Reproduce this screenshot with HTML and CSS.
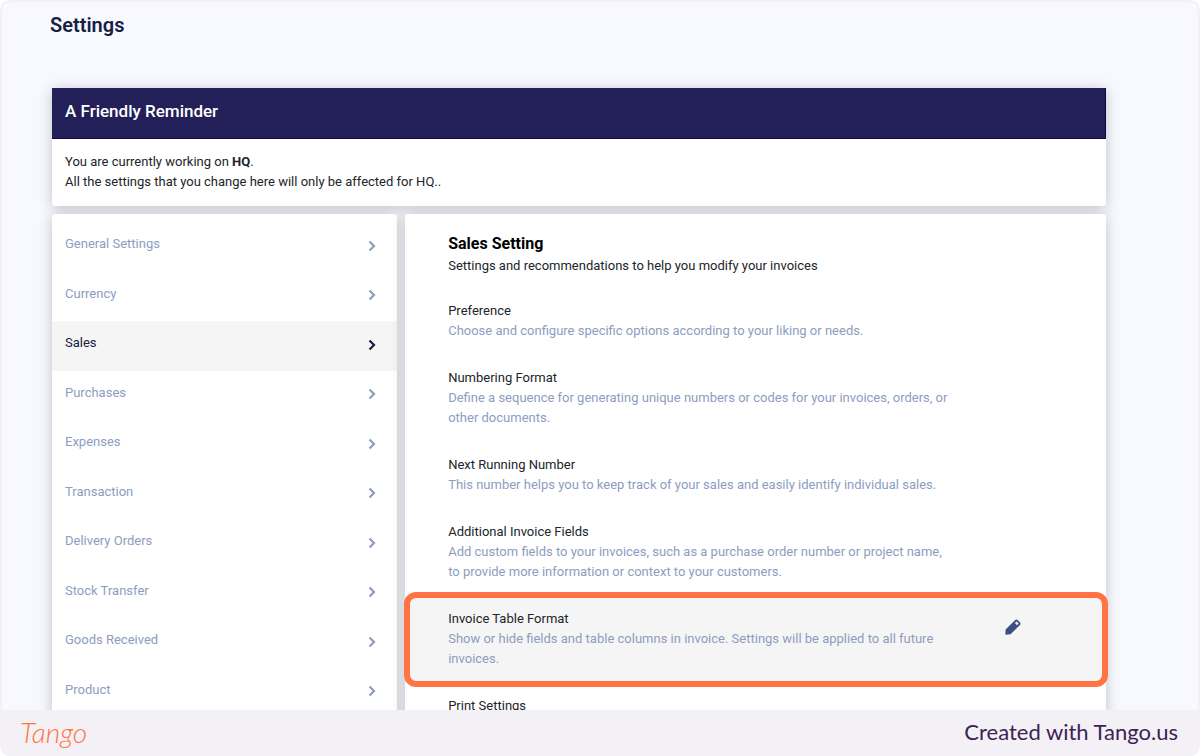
FILE: index.html
```html
<!DOCTYPE html>
<html lang="en">
<head>
    <meta charset="UTF-8">
    <meta name="viewport" content="width=device-width, initial-scale=1.0">
    <title>Settings</title>
    <link rel="stylesheet" href="styles.css">
</head>
<body>
    <svg class="sprite" aria-hidden="true">
        <symbol id="chevron" viewBox="0 0 8 12">
            <path d="M1.5 1.5 6 6 1.5 10.5" fill="none" stroke="currentColor" stroke-width="2.2"/>
        </symbol>
    </svg>

    <div class="frame">
        <main class="page">
            <h1>Settings</h1>

            <section class="card reminder">
                <h2>A Friendly Reminder</h2>
                <p>You are currently working on <b>HQ</b>.<br>
                All the settings that you change here will only be affected for HQ..</p>
            </section>

            <div class="columns">
                <nav class="card menu">
                    <a href="#">General Settings <svg class="chevron"><use href="#chevron"/></svg></a>
                    <a href="#">Currency <svg class="chevron"><use href="#chevron"/></svg></a>
                    <a href="#" class="active">Sales <svg class="chevron"><use href="#chevron"/></svg></a>
                    <a href="#">Purchases <svg class="chevron"><use href="#chevron"/></svg></a>
                    <a href="#">Expenses <svg class="chevron"><use href="#chevron"/></svg></a>
                    <a href="#">Transaction <svg class="chevron"><use href="#chevron"/></svg></a>
                    <a href="#">Delivery Orders <svg class="chevron"><use href="#chevron"/></svg></a>
                    <a href="#">Stock Transfer <svg class="chevron"><use href="#chevron"/></svg></a>
                    <a href="#">Goods Received <svg class="chevron"><use href="#chevron"/></svg></a>
                    <a href="#">Product <svg class="chevron"><use href="#chevron"/></svg></a>
                </nav>

                <section class="card detail">
                    <header class="detail-header">
                        <h2>Sales Setting</h2>
                        <p>Settings and recommendations to help you modify your invoices</p>
                    </header>
                    <div class="option">
                        <div class="option-text">
                            <h3>Preference</h3>
                            <p>Choose and configure specific options according to your liking or needs.</p>
                        </div>
                    </div>
                    <div class="option">
                        <div class="option-text">
                            <h3>Numbering Format</h3>
                            <p>Define a sequence for generating unique numbers or codes for your invoices, orders, or other documents.</p>
                        </div>
                    </div>
                    <div class="option">
                        <div class="option-text">
                            <h3>Next Running Number</h3>
                            <p>This number helps you to keep track of your sales and easily identify individual sales.</p>
                        </div>
                    </div>
                    <div class="option">
                        <div class="option-text">
                            <h3>Additional Invoice Fields</h3>
                            <p>Add custom fields to your invoices, such as a purchase order number or project name, to provide more information or context to your customers.</p>
                        </div>
                    </div>
                    <div class="option selected">
                        <div class="option-text">
                            <h3>Invoice Table Format</h3>
                            <p>Show or hide fields and table columns in invoice. Settings will be applied to all future invoices.</p>
                        </div>
                        <button class="edit" type="button" aria-label="Edit">
                            <svg viewBox="0 0 16 16">
                                <path fill-rule="evenodd" fill="#3b4f86" d="M.3 15.7.6 10.4 10 1.2Q11.4 0 12.8 1.2L15 3.4Q16.2 4.7 14.9 6.1L5.5 15.3ZM9.9 4.1 12 6.2 13.7 4.5 11.6 2.4Z"/>
                            </svg>
                        </button>
                    </div>
                    <div class="option">
                        <div class="option-text">
                            <h3>Print Settings</h3>
                        </div>
                    </div>
                </section>
            </div>
        </main>

        <footer class="footer">
            <span class="logo">Tango</span>
            <span class="credit">Created with Tango.us</span>
        </footer>
    </div>
</body>
</html>
```

FILE: styles.css
```css
* {
    margin: 0;
    padding: 0;
    box-sizing: border-box;
}

body {
    font-family: Roboto, "Liberation Sans", sans-serif;
    font-size: 13px;
    line-height: 20px;
    color: #212529;
    background: #fff;
}

.sprite {
    display: none;
}

.frame {
    display: flex;
    flex-direction: column;
    height: 100vh;
    border: 2px solid #f3f1f6;
    border-bottom: 0;
    border-radius: 10px;
    background: #f3f1f6;
    overflow: hidden;
}

.page {
    flex: 1;
    min-height: 0;
    padding: 8px 92px 0 50px;
    border-radius: 8px 8px 0 0;
    background: #f8f9fe;
    overflow: hidden;
}

h1 {
    margin: 0 0 48px -2px;
    font-size: 20px;
    line-height: 30px;
    font-weight: 600;
    color: #172044;
}

.card {
    background: #fff;
    border-radius: 3px;
    box-shadow: 0 2px 14px rgba(0, 0, 0, 0.22);
}

.reminder {
    margin-bottom: 8px;
}

.reminder h2 {
    padding: 11px 13px 15px;
    font-size: 17px;
    line-height: 24px;
    font-weight: 500;
    color: #fff;
    background: #231f58;
    border: 1px solid #0d0840;
    border-width: 0 1px 1px 0;
}

.reminder p {
    padding: 13px 13px 14px;
}

.columns {
    display: grid;
    grid-template-columns: 33fr 67fr;
    gap: 8px;
}

.menu {
    padding-top: 8px;
}

.menu a {
    display: flex;
    justify-content: space-between;
    align-items: center;
    padding: 12px 21px 18px 13px;
    line-height: 1.5;
    color: #8e9dbf;
    text-decoration: none;
}

.menu a.active {
    color: #172044;
    background: #f5f5f5;
}

.chevron {
    width: 8px;
    height: 12px;
    margin-top: 4px;
}

.detail h2 {
    font-size: 16px;
    line-height: 24px;
    font-weight: 700;
    color: #000;
}

.detail h3 {
    font-size: 13px;
    font-weight: 400;
}

.detail-header {
    padding: 18px 43px 12px;
}

.option {
    position: relative;
    display: flex;
    justify-content: space-between;
    align-items: flex-start;
    padding: 13px 85px 14px 43px;
}

.option-text {
    width: 90%;
    max-width: 506px;
}

.option p {
    color: #8e9dbf;
}

.selected {
    background: #f5f5f5;
}

/* orange ring around the current step */
.selected::after {
    content: "";
    position: absolute;
    inset: -4px -2px -4px -1px;
    border: 6px solid #ff7442;
    border-radius: 12px;
    pointer-events: none;
}

.edit {
    width: 16px;
    height: 16px;
    margin-top: 10px;
    border: 0;
    background: none;
    cursor: pointer;
}

.edit svg {
    display: block;
    width: 16px;
    height: 16px;
}

.footer {
    display: flex;
    justify-content: space-between;
    align-items: center;
    height: 46px;
    padding: 0 20px 2px 18px;
    font-family: Lato, sans-serif;
    background: #f3f1f6;
}

.logo {
    font-size: 28px;
    font-style: italic;
    font-weight: 300;
    color: #ff7442;
}

.credit {
    font-size: 22px;
    color: #3c2353;
}
```
